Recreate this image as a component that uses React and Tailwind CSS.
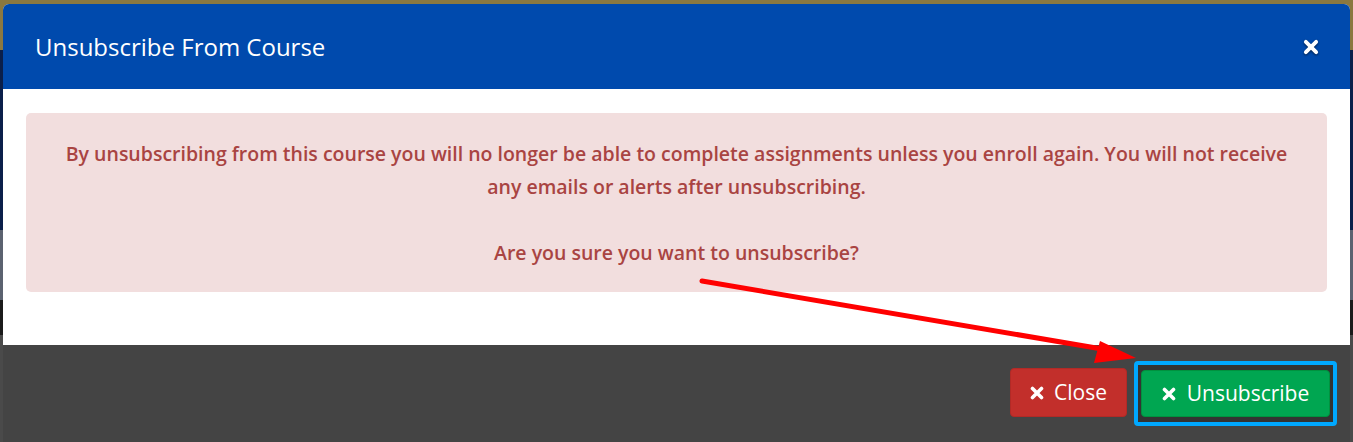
const XMark = ({ size = 14, stroke = 3.6 }) => (
  <svg width={size} height={size} viewBox="0 0 14 14" className="shrink-0">
    <path d="M2.5 2.5 L11.5 11.5 M11.5 2.5 L2.5 11.5" stroke="currentColor" strokeWidth={stroke} strokeLinecap="round" />
  </svg>
);

// annotation arrow pointing at the Unsubscribe button
const Arrow = () => (
  <svg className="pointer-events-none absolute left-0 top-0" width="1353" height="442" viewBox="0 0 1353 442">
    <line x1="702" y1="281" x2="1108" y2="350" stroke="#ff0000" strokeWidth="5" strokeLinecap="round" />
    <polygon points="1100,341 1136,358 1094,363" fill="#ff0000" />
  </svg>
);

export default function App() {
  return (
    <div
      className="relative h-[442px] w-[1353px] overflow-hidden bg-[linear-gradient(to_bottom,#8a7840_0px,#8a7840_50px,#0b1f4a_50px,#0b1f4a_230px,#5b6270_230px,#5b6270_300px,#1b1b1b_300px,#1b1b1b_335px,#4a4a4a_335px)] pl-[3px] pr-[3px] pt-[4px] font-['Open_Sans',sans-serif]"
    >
      <div className="flex h-[460px] flex-col overflow-hidden rounded-t-md bg-white">
        <div className="flex h-[85px] shrink-0 items-center justify-between bg-[#004aad] pl-[32px] pr-[31px]">
          <h4 className="text-[24px] text-white">Unsubscribe From Course</h4>
          <button className="text-white drop-shadow-[0_1px_1px_rgba(0,0,0,0.6)]">
            <XMark size={16} stroke={3.4} />
          </button>
        </div>

        <div className="shrink-0 px-[23px] pb-[53px] pt-[24px]">
          <div className="rounded-[5px] bg-[#f2dede] px-[30px] pb-[23px] pt-[24px] text-center text-[19.5px] font-semibold leading-[33px] text-[#a94442]">
            By unsubscribing from this course you will no longer be able to complete assignments unless you enroll again. You will not receive any emails or alerts after unsubscribing.
            <br />
            <br />
            Are you sure you want to unsubscribe?
          </div>
        </div>

        <div className="flex flex-1 items-start justify-end gap-[7px] bg-[#444444] pr-[13px] pt-[16px]">
          <button className="mt-[7px] flex h-[49px] w-[117px] items-center justify-center gap-[10px] rounded-[4px] border border-[#b22a26] bg-[#c22f2b] text-[21px] text-white">
            <XMark size={14} />
            Close
          </button>
          <div className="rounded-[4px] border-4 border-[#00a8ff] bg-[#333333] px-[3px] py-[5px]">
            <button className="flex h-[47px] w-[189px] items-center justify-center gap-[11px] rounded-[4px] border border-[#00923f] bg-[#00a651] text-[21px] text-white">
              <XMark size={14} />
              Unsubscribe
            </button>
          </div>
        </div>
      </div>
      <Arrow />
    </div>
  );
}
